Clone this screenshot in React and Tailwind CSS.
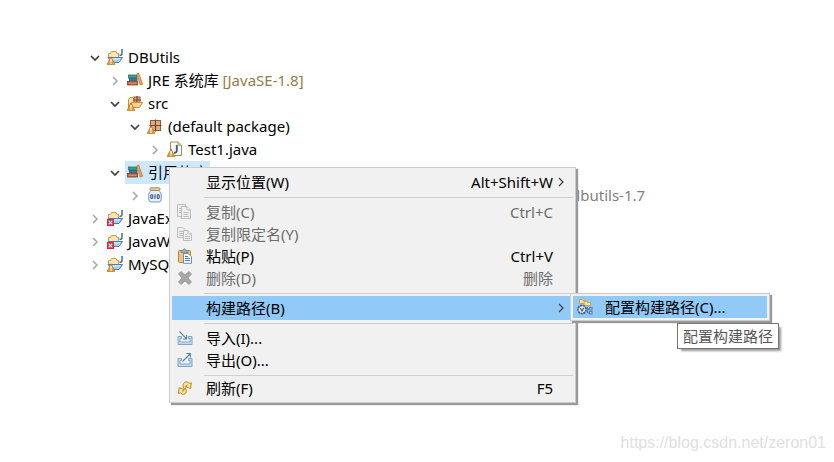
const FONT =
  'font-["Noto_Sans","Noto_Sans_CJK_SC",sans-serif] text-[15px] leading-[22px]';

function Svg({ children }) {
  return (
    <svg width="16" height="16" viewBox="0 0 16 16" className="shrink-0" aria-hidden="true">
      {children}
    </svg>
  );
}

function Warning() {
  return (
    <g>
      <path d="M4 7.8 L7.8 15.4 H0.2 Z" fill="#e5a040" stroke="#b9741a" strokeWidth="0.8" strokeLinejoin="round" />
      <path d="M4 10 V12.8 M4 13.5 V14.7" stroke="#fff" strokeWidth="1.3" />
    </g>
  );
}

function ErrorMark() {
  return (
    <g>
      <rect x="0" y="9" width="7" height="7" fill="#d8293f" />
      <path d="M1.7 10.7 L5.3 14.3 M5.3 10.7 L1.7 14.3" stroke="#fff" strokeWidth="1.2" />
    </g>
  );
}

function ProjectIcon({ error }) {
  return (
    <Svg>
      <path d="M1.5 8.5 V4.5 H3.5 L4.5 2.5 H9 L10 4.5 H11.5 V8.5 Z" fill="#fbe6ae" stroke="#c79b50" />
      <path d="M15 0 V4.5 Q15 6.5 12.5 6.3" fill="none" stroke="#3f6f9f" strokeWidth="1.5" />
      <path d="M1 8.5 H15.5 L12 13.5 H5 L1 8.5 Z" fill="#a9cdf3" stroke="#4a7db5" />
      <path d="M3.5 9.8 H13" stroke="#e2f0fd" />
      {error ? <ErrorMark /> : <Warning />}
    </Svg>
  );
}

function LibraryIcon() {
  return (
    <Svg>
      <rect x="1.5" y="3" width="8" height="3" fill="#3f9e83" stroke="#1f7a66" strokeWidth="0.8" />
      <rect x="2.5" y="6.5" width="7.5" height="2.5" fill="#3f78a8" stroke="#245d86" strokeWidth="0.8" />
      <rect x="0.5" y="9.5" width="10" height="3.5" fill="#b9633a" stroke="#8f3f25" strokeWidth="0.8" />
      <path d="M2 11.2 H9.5" stroke="#e7a06c" />
      <path d="M9.6 2 L11.6 1 L15.6 12.2 L13.2 13 Z" fill="#f2a950" stroke="#b9702c" strokeWidth="0.8" />
    </Svg>
  );
}

function PackageGrid({ x, y, s }) {
  const m = s / 2;
  return (
    <g>
      <rect x={x} y={y} width={s} height={s} fill="#dcae85" stroke="#94593a" />
      <path
        d={`M${x + m} ${y - 1} V${y + s + 1} M${x - 1} ${y + m} H${x + s + 1}`}
        stroke="#7a452d"
        strokeWidth="1.2"
      />
    </g>
  );
}

function SourceIcon() {
  return (
    <Svg>
      <path d="M1.5 12 V4.5 L3 2.5 H6 L7 4 H12 V12 Z" fill="#fbe3a5" stroke="#c58f3d" />
      <PackageGrid x={7} y={2} s={6} />
      <path d="M1.5 12.5 L4.5 7.5 H15.5 L12.5 12.5 Z" fill="#fad68b" stroke="#c58f3d" />
      <Warning />
    </Svg>
  );
}

function PackageIcon() {
  return (
    <Svg>
      <PackageGrid x={3.5} y={2.5} s={10} />
      <Warning />
    </Svg>
  );
}

function JavaFileIcon() {
  return (
    <Svg>
      <path d="M3.5 1 H11 L14.5 4 V14.5 H3.5 Z" fill="#f6f8fb" stroke="#a78b54" />
      <path d="M11 1 V4.2 H14.5" fill="#ecd79d" stroke="#a78b54" strokeWidth="0.8" />
      <path d="M9.8 4 V9.5 Q9.8 12 7 11.8" fill="none" stroke="#2f6293" strokeWidth="1.9" />
      <Warning />
    </Svg>
  );
}

function JarIcon() {
  return (
    <Svg>
      <path d="M4 3.5 Q1.8 5 1.8 7 V13 Q2 15 4 15 H12 Q14 15 14.2 13 V7 Q14.2 5 12 3.5 Z" fill="#e4edf8" stroke="#7d97bd" />
      <rect x="3" y="0.8" width="10" height="2.6" rx="1" fill="#f2d592" stroke="#8d8463" strokeWidth="0.9" />
      <g fill="none" stroke="#35568c" strokeWidth="1.1">
        <rect x="3.8" y="7.8" width="2" height="3.6" rx="0.8" />
        <path d="M8 7.3 V12" />
        <rect x="10.2" y="7.8" width="2" height="3.6" rx="0.8" />
      </g>
    </Svg>
  );
}

function CopyIcon() {
  return (
    <Svg>
      <g fill="#efefef" stroke="#bdbdbd">
        <path d="M0.5 0.5 H8.5 V12.5 H0.5 Z" />
        <path d="M4.5 2.5 H10 L13.5 6 V14.5 H4.5 Z" />
        <path d="M10 2.5 V6 H13.5 M6.5 8.5 H11.5 M6.5 10.5 H11.5 M6.5 12.5 H11.5 M2 4.5 H4 M2 6.5 H4 M2 8.5 H4" />
      </g>
    </Svg>
  );
}

function CopyNameIcon() {
  return (
    <Svg>
      <g fill="#efefef" stroke="#bdbdbd">
        <path d="M0.5 1.5 H6 L8.5 4 V11.5 H0.5 Z" />
        <path d="M2 5.5 H7 M2 7.5 H7 M2 9.5 H7" />
        <path d="M6.5 4.5 H11 L14.5 8 V14.5 H6.5 Z" />
        <path d="M11 4.5 V8 H14.5 M8 8.5 H10 M8 10.5 H13 M8 12.5 H13" />
      </g>
    </Svg>
  );
}

function PasteIcon() {
  return (
    <Svg>
      <rect x="1.5" y="2.5" width="12" height="12" rx="1" fill="#f0c479" stroke="#b8823e" />
      <path d="M4 4.5 V2.5 H6 Q6 0.8 7.5 0.8 Q9 0.8 9 2.5 H11 V4.5 Z" fill="#a9b0b8" stroke="#76808b" strokeWidth="0.8" />
      <path d="M6.5 5.5 H11 L14.5 8.5 V15.3 H6.5 Z" fill="#fff" stroke="#6f8fb5" />
      <path d="M8 8.5 H11 M8 10.5 H13 M8 12.5 H13" stroke="#5479a8" />
    </Svg>
  );
}

function DeleteIcon() {
  return (
    <Svg>
      <path
        d="M4 1.5 L8 5 L12 1.5 L14.5 4 L11 8 L14.5 12 L12 14.5 L8 11 L4 14.5 L1.5 12 L5 8 L1.5 4 Z"
        fill="#a6a6a6"
        stroke="#979797"
        strokeWidth="0.8"
      />
    </Svg>
  );
}

function Tray() {
  return (
    <path d="M4.5 6.5 H1 V14.5 H15 V6.5 H11.5 V8.5 H13 V12 H3 V8.5 H4.5 Z" fill="#c6dbf1" stroke="#7b9cc4" strokeWidth="0.9" />
  );
}

function ImportIcon() {
  return (
    <Svg>
      <Tray />
      <path d="M2.5 1.5 L9.3 8.6 M9.6 5 V9 H5.8" fill="none" stroke="#4f86a8" strokeWidth="1.1" />
    </Svg>
  );
}

function ExportIcon() {
  return (
    <Svg>
      <Tray />
      <path d="M5.5 9.5 L13 2 M9.3 1.5 H13.4 V5.5" fill="none" stroke="#4f86a8" strokeWidth="1.1" />
    </Svg>
  );
}

function RefreshIcon() {
  return (
    <Svg>
      <g fill="#fbe3a0" stroke="#c48a26" strokeWidth="1" strokeLinejoin="round">
        <path d="M7 8.8 Q4.8 4.5 7.6 2.4 Q10.2 0.6 12.2 3.4 L14.4 2.8 L13.6 8.6 L8.6 6.6 L10.2 5.2 Q8.4 4.6 8.8 7.8 Z" />
        <path d="M8.6 8.6 Q10.8 12.2 8 14 Q5.4 15.4 3.6 12.8 L1.4 13.4 L2.2 7.6 L7 9.6 L5.4 11 Q7.2 11.8 7 9.2 Z" />
      </g>
    </Svg>
  );
}

function BuildPathIcon() {
  return (
    <Svg>
      <path d="M2.5 4.5 V0.5 H5 L6 1.5 H8.5 V4.5 Z" fill="#fbe09a" stroke="#c99a3b" strokeWidth="0.8" />
      <path d="M7 6.5 V2.5 H9.5 L10.3 3.5 H13.5 V6.5 Z" fill="#fbe09a" stroke="#c99a3b" strokeWidth="0.8" />
      <circle cx="5" cy="10.5" r="4.1" fill="#e4ecf5" stroke="#435c80" strokeWidth="1.7" strokeDasharray="2.2 0.6" />
      <path d="M3.3 9 L5 12 L7 8.8" fill="none" stroke="#435c80" strokeWidth="1.2" />
      <path d="M10.5 8 V14 M10.5 10 H12 M10.5 14 H12" stroke="#5577a5" fill="none" />
      <rect x="12.5" y="8.5" width="2.5" height="2.5" fill="#a9cdf0" stroke="#5577a5" strokeWidth="0.9" />
      <rect x="12.5" y="12.5" width="2.5" height="2.5" fill="#a9cdf0" stroke="#5577a5" strokeWidth="0.9" />
    </Svg>
  );
}

function Chevron({ open }) {
  return (
    <svg width="12" height="12" viewBox="0 0 12 12" className="shrink-0" aria-hidden="true">
      {open ? (
        <path d="M2 4 L6 8 L10 4" fill="none" stroke="#404040" strokeWidth="1.7" />
      ) : (
        <path d="M4 2 L8 6 L4 10" fill="none" stroke="#a6a6a6" strokeWidth="1.5" />
      )}
    </svg>
  );
}

const INDENT = ["pl-[89px]", "pl-[109px]", "pl-[129px]", "pl-[149px]"];

function TreeRow({ level, open, icon, selected, children }) {
  return (
    <li className={`flex h-[23px] items-center gap-1 ${INDENT[level]}`}>
      <Chevron open={open} />
      <span
        className={`flex h-full items-center gap-[5px] px-0.5 pb-0.5 whitespace-pre ${selected ? "bg-[#cce8ff]" : ""}`}
      >
        {icon}
        {children}
      </span>
    </li>
  );
}

function MenuItem({ icon, label, shortcut, submenu, disabled, active }) {
  return (
    <button
      type="button"
      disabled={disabled}
      className={`flex w-full items-center pr-2 pl-[5px] text-left ${
        active ? "h-6 bg-[#91c9f7]" : "h-[22px] pb-0.5"
      } ${disabled ? "text-[#6d6d6d]" : "text-black"}`}
    >
      <span className="w-[29px] shrink-0">{icon}</span>
      <span className="grow">{label}</span>
      <span>{shortcut}</span>
      <span className="flex w-3 shrink-0 justify-end">
        {submenu && (
          <svg width="8" height="10" viewBox="0 0 8 10" aria-hidden="true">
            <path d="M2 1 L6 5 L2 9" fill="none" stroke="#404040" strokeWidth="1.2" />
          </svg>
        )}
      </span>
    </button>
  );
}

function Separator({ tight }) {
  return <hr className={`mt-[3px] ml-8 border-t border-[#d0d0d0] ${tight ? "mb-0.5" : "mb-1"}`} />;
}

export default function App() {
  return (
    <main className={`relative flex min-h-screen flex-col justify-between overflow-hidden bg-white text-black ${FONT}`}>
      <ul className="pt-[46px]">
        <TreeRow level={0} open icon={<ProjectIcon />}>DBUtils</TreeRow>
        <TreeRow level={1} icon={<LibraryIcon />}>
          <span>JRE 系统库 <span className="text-[#957d47]">[JavaSE-1.8]</span></span>
        </TreeRow>
        <TreeRow level={1} open icon={<SourceIcon />}>src</TreeRow>
        <TreeRow level={2} open icon={<PackageIcon />}>(default package)</TreeRow>
        <TreeRow level={3} icon={<JavaFileIcon />}>Test1.java</TreeRow>
        <TreeRow level={1} open selected icon={<LibraryIcon />}>引用的库</TreeRow>
        <TreeRow level={2} icon={<JarIcon />}>
          <span className="w-[398px]" />
          <span className="text-[#808080]">dbutils-1.7</span>
        </TreeRow>
        <TreeRow level={0} icon={<ProjectIcon error />}>JavaEx</TreeRow>
        <TreeRow level={0} icon={<ProjectIcon error />}>JavaW</TreeRow>
        <TreeRow level={0} icon={<ProjectIcon />}>MySQL</TreeRow>
      </ul>

      <p className='px-2 pb-2 text-right font-["Liberation_Sans",sans-serif] text-[16px] text-[#e0e0e0]'>
        https://blog.csdn.net/zeron01
      </p>

      <div className="absolute top-[167px] left-[169px] w-[407px] border border-[#cccccc] bg-[#f1f1f1] px-0.5 pt-1 pb-0.5 shadow-[2px_2px_1px_#999999]">
        <MenuItem label="显示位置(W)" shortcut="Alt+Shift+W" submenu />
        <Separator />
        <MenuItem icon={<CopyIcon />} label="复制(C)" shortcut="Ctrl+C" disabled />
        <MenuItem icon={<CopyNameIcon />} label="复制限定名(Y)" disabled />
        <MenuItem icon={<PasteIcon />} label="粘贴(P)" shortcut="Ctrl+V" />
        <MenuItem icon={<DeleteIcon />} label="删除(D)" shortcut="删除" disabled />
        <Separator tight />
        <MenuItem label="构建路径(B)" submenu active />
        <Separator />
        <MenuItem icon={<ImportIcon />} label="导入(I)..." />
        <MenuItem icon={<ExportIcon />} label="导出(O)..." />
        <Separator tight />
        <MenuItem icon={<RefreshIcon />} label="刷新(F)" shortcut="F5" />
      </div>

      <div className="absolute top-[293px] left-[570px] w-[200px] border border-[#cccccc] bg-[#f1f1f1] p-0.5 shadow-[2px_2px_1px_#999999]">
        <button type="button" className="flex h-[22px] w-full items-center gap-3 bg-[#91c9f7] pl-1 text-left">
          <BuildPathIcon />
          配置构建路径(C)...
        </button>
      </div>

      <div
        role="tooltip"
        className="absolute top-[323px] left-[677px] border border-[#767676] bg-white px-[5px] py-px text-[#575757] shadow-[3px_3px_2px_-1px_#999999]"
      >
        配置构建路径
      </div>
    </main>
  );
}
